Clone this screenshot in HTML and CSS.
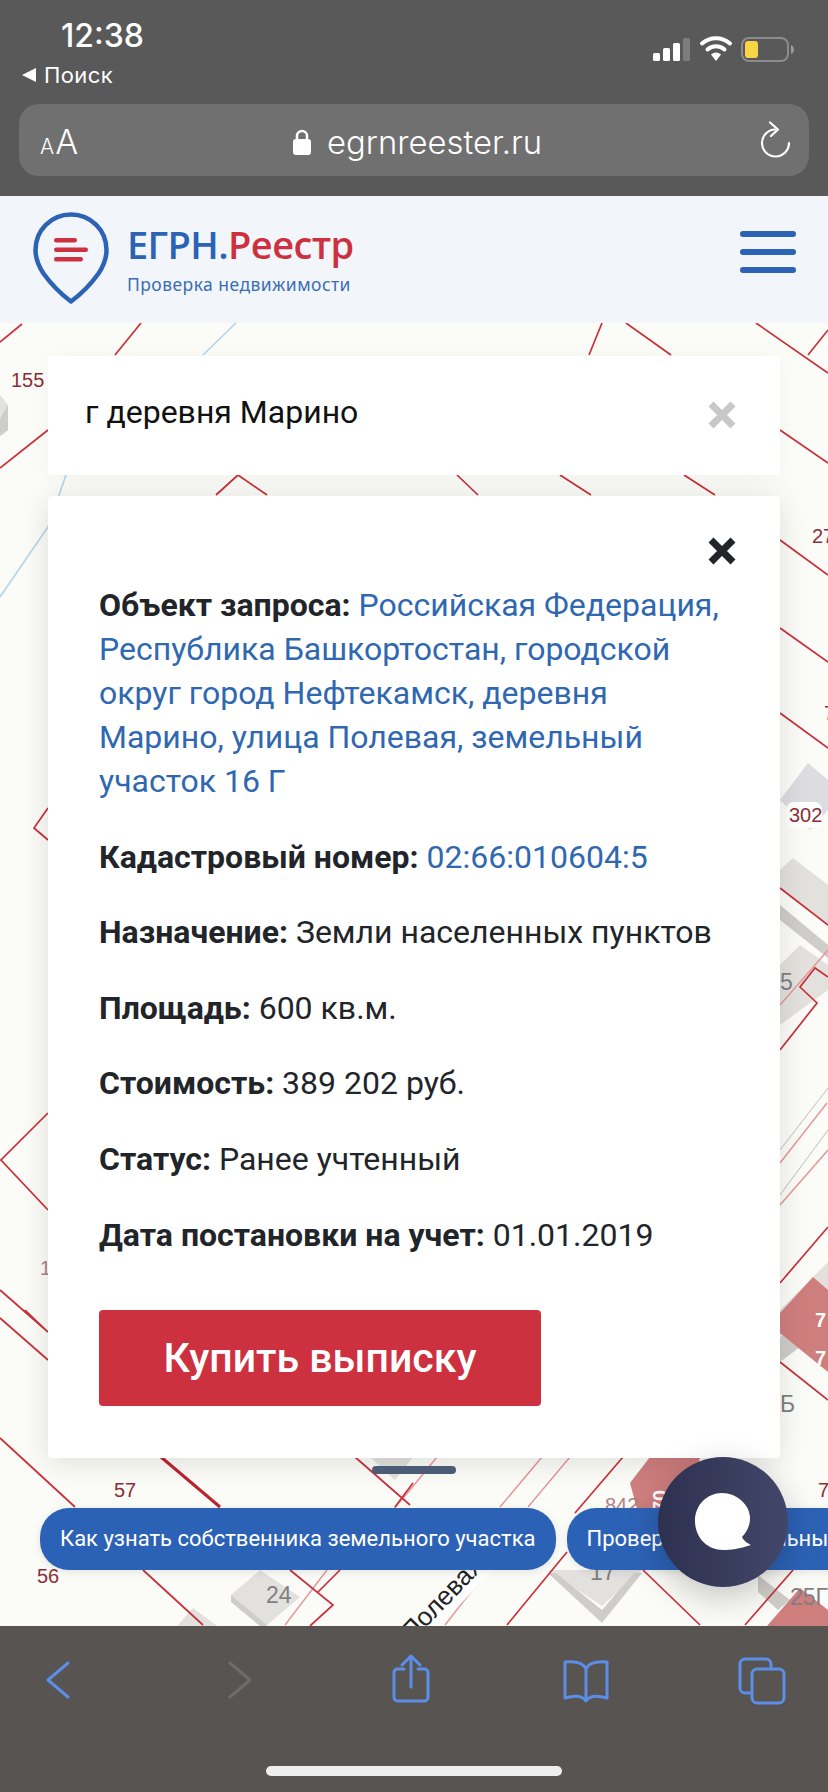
FILE: index.html
```html
<!DOCTYPE html>
<html lang="ru">
<head>
<meta charset="utf-8">
<title>ЕГРН.Реестр</title>
<link rel="stylesheet" href="styles.css">
</head>
<body>
<div class="phone">
  <header class="safari-top">
    <div class="status">
      <div class="status-left">
        <div class="time">12:38</div>
        <div class="back-app"><span class="back-tri"></span>Поиск</div>
      </div>
      <svg class="status-icons" width="145" height="30" viewBox="650 35 145 30">
        <rect x="653" y="53" width="7" height="8" rx="1.5" fill="#fff"/>
        <rect x="663" y="48" width="7" height="13" rx="1.5" fill="#fff"/>
        <rect x="673" y="43" width="7" height="18" rx="1.5" fill="#fff"/>
        <rect x="683" y="38" width="7" height="23" rx="1.5" fill="#7d7d7d"/>
        <path d="M702 43.5a21 21 0 0 1 28 0" fill="none" stroke="#fff" stroke-width="4" stroke-linecap="round"/>
        <path d="M707.500 49.500a13 13 0 0 1 17 0" fill="none" stroke="#fff" stroke-width="4" stroke-linecap="round"/>
        <path d="M711 54.500a8 8 0 0 1 10 0L716 61z" fill="#fff"/>
        <rect x="742" y="38" width="46" height="23" rx="7" fill="none" stroke="#8c8c8c" stroke-width="2"/>
        <rect x="745" y="41" width="13" height="17" rx="3" fill="#f8d546"/>
        <path d="M791 45c2 1 3 2.500 3 4.500s-1 3.500-3 4.500z" fill="#9a9a9a"/>
      </svg>
    </div>
    <div class="url-bar">
      <div class="aa"><span class="aa-s">A</span><span class="aa-l">A</span></div>
      <div class="url">
        <svg class="lock" width="18" height="26" viewBox="0 0 18 26">
          <path d="M4 11V7a5 5 0 0 1 10 0v4" fill="none" stroke="#fff" stroke-width="2.500"/>
          <rect x="0" y="10" width="18" height="16" rx="3" fill="#fff"/>
        </svg>
        <span class="url-text">egrnreester.ru</span>
      </div>
      <svg class="reload" width="32" height="38" viewBox="0 0 32 38">
        <path d="M15 8.500A13.500 13.500 0 1 0 29 22" fill="none" stroke="#fff" stroke-width="2.200" stroke-linecap="round"/>
        <path d="M10 1.500l8 7-7 6.500" fill="none" stroke="#fff" stroke-width="2.200" stroke-linecap="round" stroke-linejoin="round"/>
      </svg>
    </div>
  </header>

  <div class="site-header">
    <div class="logo">
      <svg class="pin" width="76" height="92" viewBox="0 0 76 92">
        <path d="M38 2.500C18 2.500 2.500 18.500 2.500 38c0 9 3 16 8 23.500C18 72 28 82 38 89.500 48 82 58 72 65.500 61.500c5-7.500 8-14.500 8-23.500C73.500 18.500 58 2.500 38 2.500z" fill="none" stroke="#2c63b4" stroke-width="4.500" stroke-linejoin="round"/>
        <rect x="21" y="26" width="23" height="4.500" rx="2.200" fill="#cd3140"/>
        <rect x="21" y="35.500" width="34" height="4.500" rx="2.200" fill="#cd3140"/>
        <rect x="21" y="45" width="29" height="4.500" rx="2.200" fill="#cd3140"/>
      </svg>
      <div class="brand">
        <div class="brand-name"><span class="blue">ЕГРН.</span><span class="red">Реестр</span></div>
        <div class="brand-sub">Проверка недвижимости</div>
      </div>
    </div>
    <div class="burger"><span></span><span></span><span></span></div>
  </div>

  <main class="map">
    <svg class="map-art" width="828" height="1303" viewBox="0 323 828 1303">
      <g class="bld-gray">
        <path d="M780 1310L828 1262V1290L780 1340z"/>
        <path d="M780 870L793 858L828 885V925L780 888z"/>
        <path d="M780 965L800 945L828 965V990L780 1025z"/>
        <path d="M231 1595L260 1570L300 1597L267 1625z"/>
        <path d="M177 1626L193 1608L217 1626z"/>
        <path d="M370 1457L395 1480L413 1457z"/>
        <path d="M0 395L8 405V430L0 436z"/>
        <path d="M548 1570H642L602 1606z"/>
      </g>
      <g class="bld-dark">
        <path d="M780 905L828 945V958L780 920z"/>
        <path d="M231 1595L267 1625L267 1632L231 1602z"/>
        <path d="M548 1573L602 1623L642 1573H634L602 1610L556 1573z"/>
        <path d="M758 1575L790 1600L778 1610L758 1592z"/>
        <path d="M3 413L8 405V430L0 436V420z"/>
        <path d="M780 1338L808 1312L828 1310V1326L780 1362z"/>
      </g>
      <path class="bld-lav" d="M808 763L780 800L810 830L828 810V780z"/>
      <g class="bld-rose">
        <path d="M780 1313L813 1277L828 1290V1372L780 1333z"/>
        <path d="M650 1457H700L690 1520H640L630 1483z"/>
        <path d="M767 1626L800 1588L828 1610V1626z"/>
      </g>
      <g class="ln-thin">
        <path d="M542 1457L500 1507M570 1457L528 1507M437 1457L410 1490L380 1525M477 1570L433 1625M488 1570L445 1625M828 950L780 1005M827 1103L780 1163M828 1150L780 1205M327 1570L285 1625"/>
      </g>
      <g class="ln-gray">
        <path d="M828 1088L780 1150M828 1130L780 1195"/>
      </g>
      <g class="ln-red">
        <path d="M22 324L0 342M48 430L0 468M48 808L34 828L48 840M48 1113L1 1160L48 1210M0 1290L48 1332M0 1318L48 1360M25 1310L48 1332"/>
        <path d="M141 323L115 355M602 323L589 355M626 323L671 355M756 323L828 373M808 355L828 330"/>
        <path d="M238 475L216 495M238 475L267 495M457 475L478 495M560 475L591 495M684 475L715 495"/>
        <path d="M780 430L828 463M780 540L828 575M780 628L828 662M780 713L828 748M780 888L828 925"/>
        <path d="M828 977L815 968L800 987L817 1003L780 1050M828 1227L780 1283M780 1362L828 1400"/>
        <path d="M0 1438L75 1507M143 1570L203 1625M355 1457L410 1505M290 1570L333 1605L310 1626M340 1570L317 1593M413 1483L395 1507"/>
        <path d="M623 1457L575 1513M567 1552L507 1625M643 1570L700 1625M793 1570L745 1625"/>
      </g>
      <path class="ln-thick" d="M161 1457L220 1507"/>
      <path class="ln-blue" d="M236 323L203 355M66 475L48 527L0 597"/>
      <path class="street-band" d="M413 1640L490 1558"/>
      <text class="street" transform="translate(412 1642) rotate(-46)">Полевая</text>
      <g class="num">
        <text x="11" y="387">155</text>
        <text x="812" y="543">27</text>
        <text x="824" y="720">7</text>
        <text x="114" y="1497">57</text>
        <text x="37" y="1583">56</text>
        <text x="40" y="1275" class="num-pale">1</text>
        <text x="818" y="1497">7</text>
        <text x="605" y="1512" class="num-pale">842</text>
      </g>
      <rect class="halo" x="786" y="802" width="36" height="26" rx="8"/>
      <g class="num"><text x="789" y="822">302</text></g>
      <g class="num-g">
        <text x="266" y="1603">24</text>
        <text x="780" y="990">5</text>
        <text x="780" y="1412">Б</text>
        <text x="590" y="1580">17</text>
        <text x="790" y="1605">25Г</text>
      </g>
      <g class="num-w">
        <text x="815" y="1327">7</text>
        <text x="815" y="1365">7</text>
        <text transform="translate(667 1512) rotate(-90)">70</text>
      </g>
    </svg>

    <div class="search">
      <span class="search-text">г деревня Марино</span>
      <svg class="x x-gray" width="28" height="28" viewBox="0 0 28 28"><path d="M3 3L25 25M25 3L3 25"/></svg>
    </div>

    <section class="card">
      <svg class="x x-dark card-close" width="28" height="28" viewBox="0 0 28 28"><path d="M3 3L25 25M25 3L3 25"/></svg>
      <p><b>Объект запроса:</b> <a>Российская Федерация, Республика Башкортостан, городской округ город Нефтекамск, деревня Марино, улица Полевая, земельный участок 16 Г</a></p>
      <p><b>Кадастровый номер:</b> <a>02:66:010604:5</a></p>
      <p><b>Назначение:</b> Земли населенных пунктов</p>
      <p><b>Площадь:</b> 600 кв.м.</p>
      <p><b>Стоимость:</b> 389 202 руб.</p>
      <p><b>Статус:</b> Ранее учтенный</p>
      <p><b>Дата постановки на учет:</b> 01.01.2019</p>
      <div class="buy">Купить выписку</div>
    </section>

    <div class="handle"></div>
    <div class="chips">
      <div class="chip">Как узнать собственника земельного участка</div>
      <div class="chip">Проверка на земельный участок</div>
    </div>
    <div class="chat">
      <svg width="60" height="62" viewBox="0 0 60 62">
        <path d="M29 2C14 2 2 14 2 30s12 29 28 29c8 0 16-1 28-5-4-2-8-5-9-8 6-6 8-13 8-19C57 14 44 2 29 2z" fill="#fff"/>
      </svg>
    </div>
  </main>

  <footer class="safari-bottom">
    <div class="toolbar">
      <svg class="ti" width="30" height="40" viewBox="0 0 30 40"><path d="M24 3L4 20L24 37"/></svg>
      <svg class="ti ti-off" width="30" height="40" viewBox="0 0 30 40"><path d="M6 3L26 20L6 37"/></svg>
      <svg class="ti" width="40" height="50" viewBox="0 0 40 50"><path d="M20 33V3M11 11L20 2L29 11M13 15H6a4 4 0 0 0-3 3V44a4 4 0 0 0 3 3H34a4 4 0 0 0 3-3V18a4 4 0 0 0-3-3H27"/></svg>
      <svg class="ti" width="50" height="44" viewBox="0 0 50 44"><path d="M25 10C22 3 14 2 4 3V39C14 36 22 37 25 42C28 37 36 36 46 39V3C36 2 28 3 25 10V42"/></svg>
      <svg class="ti" width="48" height="48" viewBox="0 0 48 48"><path d="M13 36H7a5 5 0 0 1-5-5V7a5 5 0 0 1 5-5H28a5 5 0 0 1 5 5V12"/><rect x="14" y="12" width="32" height="34" rx="5"/></svg>
    </div>
    <div class="home-indicator"></div>
  </footer>
</div>
</body>
</html>
```

FILE: styles.css
```css
* { box-sizing: border-box; }
html, body { margin: 0; padding: 0; }
body { width: 828px; height: 1792px; overflow: hidden; font-family: Roboto, "Liberation Sans", sans-serif; background: #fbfbf8; }
.phone { width: 828px; height: 1792px; display: flex; flex-direction: column; }

/* Safari chrome */
.safari-top { height: 196px; background: #595959; padding: 0 19px; color: #fff; font-family: Inter, Roboto, sans-serif; flex: none; }
.status { height: 104px; display: flex; justify-content: space-between; align-items: flex-start; }
.status-left { padding: 18px 0 0 3px; }
.time { font-size: 32px; font-weight: 500; line-height: 36px; padding-left: 39px; }
.back-app { display: flex; align-items: center; gap: 8px; font-size: 22px; line-height: 26px; margin-top: 8px; letter-spacing: .4px; }
.back-tri { width: 0; height: 0; border-style: solid; border-width: 7px 14px 7px 0; border-color: transparent #fff transparent transparent; }
.status-icons { margin: 35px 14px 0 0; display: block; }
.url-bar { height: 72px; background: #707070; border-radius: 20px; display: flex; align-items: center; justify-content: space-between; padding: 0 17px 0 21px; position: relative; }
.aa { display: flex; align-items: baseline; gap: 1px; font-weight: 300; padding-top: 2px; }
.aa-s { font-size: 21px; }
.aa-l { font-size: 34px; }
.url { position: absolute; left: 274px; top: 20px; display: flex; align-items: center; gap: 16px; }
.url-text { font-size: 32.800px; line-height: 36px; font-weight: 300; }
.lock { display: block; }
.reload { display: block; margin-top: -1px; }

/* Site header */
.site-header { height: 127px; background: #f2f6fb; flex: none; display: flex; justify-content: space-between; align-items: flex-start; padding: 16px 32px 0 33px; }
.logo { display: flex; gap: 18px; }
.pin { display: block; }
.brand { padding-top: 12px; }
.brand-name { font-family: "Open Sans", Roboto, sans-serif; font-size: 38px; font-weight: 600; line-height: 40px; letter-spacing: -.6px; }
.blue { color: #2c63b4; }
.red { color: #cd3140; }
.brand-sub { font-size: 17.500px; line-height: 22px; color: #3a6cb5; margin-top: 9px; letter-spacing: .45px; font-family: "Noto Sans", Roboto, sans-serif; }
.burger { display: flex; flex-direction: column; gap: 12px; padding-top: 19px; }
.burger span { display: block; width: 56px; height: 6px; border-radius: 3px; background: #2c63b4; }

/* Map */
.map { flex: 1; position: relative; overflow: hidden; background: #fbfbf8; padding: 33px 48px 0; }
.map-art { position: absolute; left: 0; top: 0; display: block; }
.ln-red, .ln-thin, .ln-gray, .ln-thick, .ln-blue, .street-band { fill: none; }
.ln-red { stroke: #c9303a; stroke-width: 1.700; }
.ln-thick { stroke: #b8252e; stroke-width: 3; }
.ln-thin { stroke: #e39a9a; stroke-width: 1.500; }
.ln-gray { stroke: #bdbdbd; stroke-width: 1; }
.ln-blue { stroke: #b4d4ea; stroke-width: 1.600; }
.street-band { stroke: #ffffff; stroke-width: 20; }
.street { font-family: "Liberation Sans", sans-serif; font-size: 26px; fill: #222; }
.bld-gray { fill: #e3e1de; }
.bld-dark { fill: #cfcdc9; }
.bld-lav { fill: #dcdce1; }
.bld-rose { fill: #cf7e7e; }
.halo { fill: #fff; }
.num { font-family: "Liberation Sans", sans-serif; font-size: 20px; fill: #8c2f35; }
.num-pale { fill: #b07f87; }
.num-g { font-family: "Liberation Sans", sans-serif; font-size: 23px; fill: #7f7f7f; }
.num-w { font-family: "Liberation Sans", sans-serif; font-size: 20px; font-weight: 700; fill: #fff; }

.search { position: relative; height: 119px; background: #fff; padding: 0 44px 0 37px; display: flex; justify-content: space-between; align-items: flex-start; box-shadow: 0 4px 24px rgba(0,0,0,.04); }
.search-text { font-size: 32px; line-height: 44px; color: #111; margin-top: 34px; }
.x { display: block; fill: none; stroke-width: 7; }
.x-gray { stroke: #c8c8c8; margin-top: 45px; }
.x-dark { stroke: #212529; }

.card { position: relative; margin-top: 21px; height: 962px; background: #fff; border-radius: 4px; padding: 87px 40px 0 51px; box-shadow: 0 4px 30px rgba(0,0,0,.12); color: #212529; font-size: 32px; line-height: 44px; }
.card-close { position: absolute; right: 44px; top: 41px; }
.card p { margin: 0 0 31.600px; }
.card b { font-weight: 700; }
.card a { color: #2f68b0; }
.buy { width: 442px; height: 96px; margin-top: 53px; background: #cd3140; border-radius: 4px; color: #fff; font-size: 41px; font-weight: 500; line-height: 96px; text-align: center; }

.handle { position: absolute; left: 372px; top: 1143px; width: 84px; height: 8px; border-radius: 4px; background: #4a5d74; }
.chips { position: absolute; left: 40px; top: 1185px; display: flex; gap: 11px; white-space: nowrap; }
.chip { height: 62px; line-height: 62px; padding: 0 20px; border-radius: 29px; background: #2c62b6; color: #fff; font-size: 22px; box-shadow: 0 2px 8px rgba(0,0,0,.1); }
.chat { position: absolute; left: 658px; top: 1134px; width: 130px; height: 130px; border-radius: 50%; background: linear-gradient(90deg, #2e3050, #424769); box-shadow: 0 10px 34px rgba(0,0,0,.22); display: flex; align-items: center; justify-content: center; }

/* Bottom bar */
.safari-bottom { height: 166px; background: #585452; flex: none; position: relative; }
.toolbar { display: block; height: 100%; }
.ti { position: absolute; fill: none; stroke: #5b8ee6; stroke-width: 3; stroke-linecap: round; stroke-linejoin: round; }
.ti:nth-child(1) { left: 44px; top: 34px; }
.ti:nth-child(2) { left: 224px; top: 34px; }
.ti:nth-child(3) { left: 391px; top: 28px; }
.ti:nth-child(4) { left: 561px; top: 33px; }
.ti:nth-child(5) { left: 738px; top: 31px; }
.ti-off { stroke: #6f6c6a; }
.home-indicator { position: absolute; left: 266px; top: 140px; width: 296px; height: 10px; border-radius: 5px; background: #eeeeee; }
```
